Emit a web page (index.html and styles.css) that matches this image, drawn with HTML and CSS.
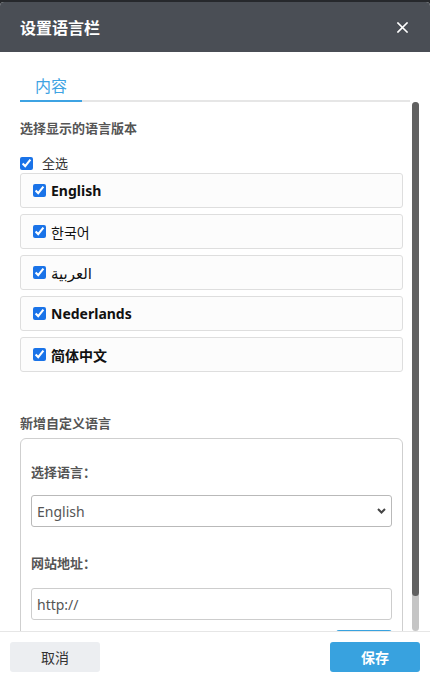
FILE: index.html
```html
<!DOCTYPE html>
<html lang="zh-CN">
<head>
<meta charset="utf-8">
<title>设置语言栏</title>
<link rel="stylesheet" href="styles.css">
</head>
<body>
<div class="dialog">
  <header class="dialog-head">
    <h1 class="dialog-title">设置语言栏</h1>
    <button class="close-btn" aria-label="关闭">
      <svg width="11" height="11" viewBox="0 0 11 11"><path d="M1 1L10 10M10 1L1 10" stroke="#fff" stroke-width="1.6" stroke-linecap="square"/></svg>
    </button>
  </header>

  <nav class="tabs">
    <span class="tab active">内容</span>
  </nav>

  <div class="body-wrap">
    <main class="dialog-body">
      <p class="section-label">选择显示的语言版本</p>
      <label class="check-all"><input type="checkbox" checked> 全选</label>

      <ul class="lang-list">
        <li class="lang-item"><label><input type="checkbox" checked><span>English</span></label></li>
        <li class="lang-item"><label><input type="checkbox" checked><span class="normal">한국어</span></label></li>
        <li class="lang-item"><label><input type="checkbox" checked><span class="arabic">العربية</span></label></li>
        <li class="lang-item"><label><input type="checkbox" checked><span>Nederlands</span></label></li>
        <li class="lang-item"><label><input type="checkbox" checked><span>简体中文</span></label></li>
      </ul>

      <p class="section-label custom-label">新增自定义语言</p>
      <div class="custom-box">
        <p class="field-label">选择语言：</p>
        <div class="select-wrap">
          <select class="field">
            <option>English</option>
          </select>
          <svg class="chevron" width="9" height="6" viewBox="0 0 9 6"><path d="M1 1L4.5 4.5L8 1" fill="none" stroke="#444" stroke-width="2"/></svg>
        </div>
        <p class="field-label url-label">网站地址：</p>
        <input class="field" type="text" placeholder="http://">
        <div class="add-row"><button class="add-btn" aria-label="添加"></button></div>
      </div>
    </main>
    <div class="scrollbar"><div class="scroll-thumb"></div></div>
  </div>

  <footer class="dialog-foot">
    <button class="btn btn-cancel">取消</button>
    <button class="btn btn-save">保存</button>
  </footer>
</div>
</body>
</html>
```
FILE: styles.css
```css
* { box-sizing: border-box; }

html, body {
  margin: 0;
  padding: 0;
  height: 681px;
  overflow: hidden;
}

body {
  background: #26282c;
  font-family: "Noto Sans", "Noto Sans CJK SC", "DejaVu Sans", sans-serif;
  color: #333;
}

.dialog {
  margin-top: 2px;
  height: 679px;
  background: #fff;
  border-radius: 4px 4px 0 0;
  display: flex;
  flex-direction: column;
  overflow: hidden;
}

/* header bar */
.dialog-head {
  height: 50px;
  flex: none;
  background: #4a4e55;
  display: flex;
  align-items: center;
  justify-content: space-between;
  padding: 0 22px 0 20px;
}

.dialog-title {
  margin: 0;
  font-size: 16px;
  font-weight: bold;
  color: #fff;
}

.close-btn {
  border: 0;
  background: none;
  padding: 0;
  width: 12px;
  height: 12px;
  display: flex;
  align-items: center;
  justify-content: center;
  cursor: pointer;
}

/* tabs */
.tabs {
  flex: none;
  margin: 0 20px;
  padding-top: 20px;
  border-bottom: 2px solid #e6e6e6;
  display: flex;
}

.tab {
  font-size: 16px;
  line-height: 28px;
  padding: 0 15px;
  color: #3ea3e3;
  margin-bottom: -2px;
  border-bottom: 2px solid transparent;
}

.tab.active { border-bottom-color: #3ea3e3; }

/* scrolling body with its scrollbar */
.body-wrap {
  flex: 1;
  min-height: 0;
  display: flex;
  padding-right: 11px;
}

.dialog-body {
  flex: 1;
  min-width: 0;
  overflow: hidden;
  padding: 0 9px 0 20px;
}

.scrollbar {
  flex: none;
  width: 7px;
  background: #c5c5c5;
  border-radius: 4px;
}

.scroll-thumb {
  height: 494px;
  background: #616161;
  border-radius: 4px;
}

.section-label {
  margin: 16px 0 0;
  font-size: 13px;
  line-height: 20px;
  font-weight: bold;
  color: #555;
}

.check-all {
  margin-top: 15px;
  display: flex;
  align-items: center;
  gap: 9px;
  font-size: 13px;
  line-height: 20px;
  color: #333;
}

input[type="checkbox"] {
  margin: 0;
  width: 13px;
  height: 13px;
  accent-color: #1a73e8;
}

.lang-list {
  list-style: none;
  margin: 0;
  padding: 0;
  display: flex;
  flex-direction: column;
  gap: 6px;
}

.lang-item {
  height: 35px;
  border: 1px solid #dedede;
  border-radius: 3px;
  background: #fcfcfc;
  padding: 0 12px;
  display: flex;
  align-items: center;
}

.lang-item label {
  display: flex;
  align-items: center;
  gap: 5px;
  font-size: 14px;
  font-weight: bold;
  color: #111;
}

.lang-item .normal { font-weight: normal; }
.lang-item .arabic { font-weight: normal; font-size: 15px; }

.custom-label { margin-top: 41px; }

.custom-box {
  margin-top: 5px;
  border: 1px solid #cfcfcf;
  border-radius: 6px;
  padding: 23px 10px 9px;
}

.field-label {
  margin: 0;
  font-size: 13px;
  line-height: 20px;
  font-weight: bold;
  color: #555;
}

.url-label { margin-top: 26px; }

.select-wrap {
  position: relative;
  margin-top: 13px;
}

.field {
  display: block;
  width: 100%;
  height: 32px;
  border: 1px solid #b9b9b9;
  border-radius: 3px;
  background: #fff;
  padding: 0 5px;
  font-family: inherit;
  font-size: 14px;
  color: #555;
  outline: none;
}

select.field {
  appearance: none;
  -webkit-appearance: none;
}

input.field {
  margin-top: 15px;
  border-color: #cdcdcd;
}

input.field::placeholder { color: #555; }

.chevron {
  position: absolute;
  right: 6px;
  top: 13px;
  pointer-events: none;
}

.add-row {
  margin-top: 10px;
  display: flex;
  justify-content: flex-end;
}

.add-btn {
  width: 56px;
  height: 30px;
  border: 0;
  border-radius: 3px;
  background: #38a2df;
}

/* footer */
.dialog-foot {
  flex: none;
  height: 50px;
  border-top: 1px solid #e6e6e6;
  padding: 10px 10px 9px;
  display: flex;
  justify-content: space-between;
}

.btn {
  width: 90px;
  height: 30px;
  border: 0;
  border-radius: 3px;
  font-family: inherit;
  font-size: 14px;
  cursor: pointer;
}

.btn-cancel {
  background: #eceef1;
  color: #333;
}

.btn-save {
  background: #38a2df;
  color: #fff;
  font-weight: bold;
}
```
